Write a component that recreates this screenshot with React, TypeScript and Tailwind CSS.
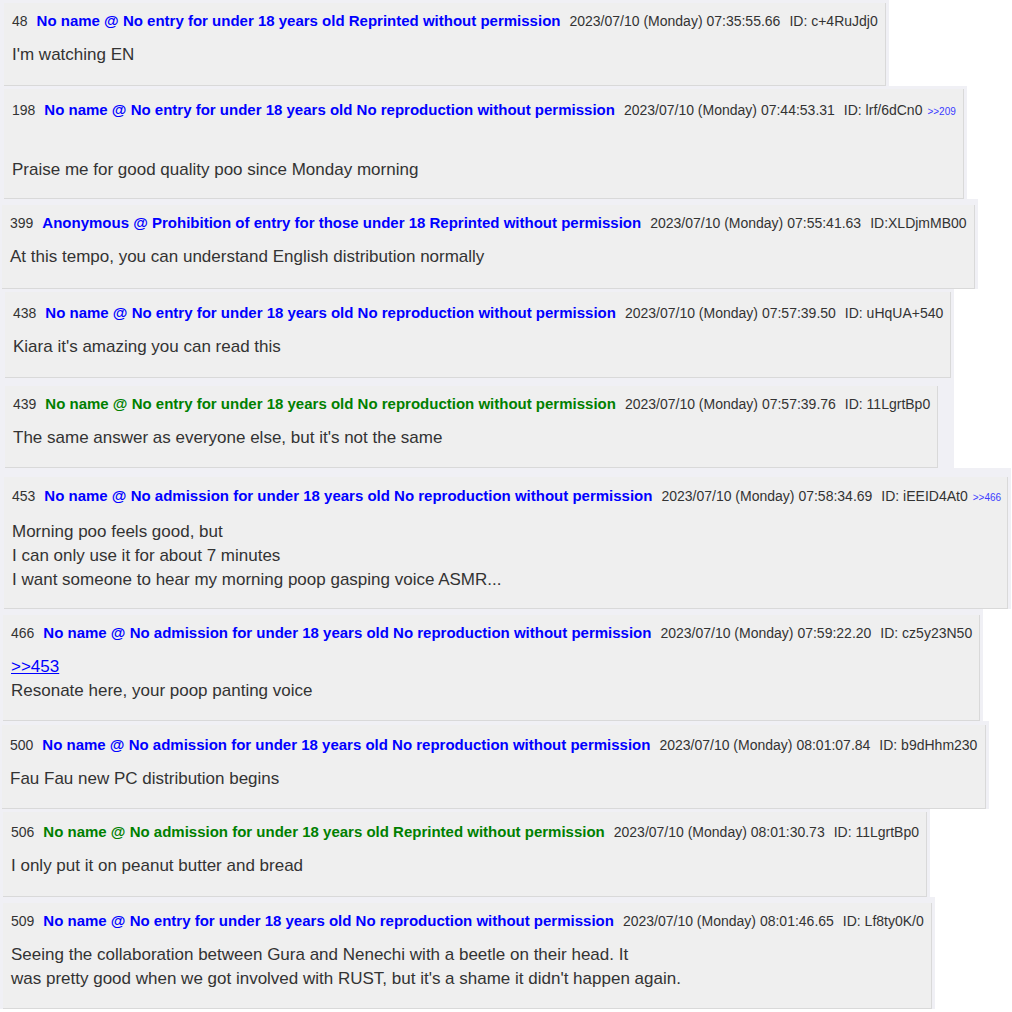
type Post = {
  no: number
  name: string
  green?: boolean
  date: string
  id: string
  reply?: string
  body: string[]
  quote?: string
  strip: string
  box: string
}

const posts: Post[] = [
  {
    no: 48,
    name: "No name @ No entry for under 18 years old Reprinted without permission",
    date: "2023/07/10 (Monday) 07:35:55.66",
    id: "ID: c+4RuJdj0",
    body: ["I'm watching EN"],
    strip: "pt-[3px] pl-[4px] pr-[3px]",
    box: "w-[882px] pt-[8px] pb-[18px]",
  },
  {
    no: 198,
    name: "No name @ No entry for under 18 years old No reproduction without permission",
    date: "2023/07/10 (Monday) 07:44:53.31",
    id: "ID: lrf/6dCn0",
    reply: ">>209",
    body: ["", "Praise me for good quality poo since Monday morning"],
    strip: "pt-[3px] pl-[4px] pr-[3px]",
    box: "w-[960px] pt-[11px] pb-[16px]",
  },
  {
    no: 399,
    name: "Anonymous @ Prohibition of entry for those under 18 Reprinted without permission",
    date: "2023/07/10 (Monday) 07:55:41.63",
    id: "ID:XLDjmMB00",
    body: ["At this tempo, you can understand English distribution normally"],
    strip: "pt-[6px] pl-[2px] pr-[3px]",
    box: "w-[973px] pt-[8px] pb-[19px]",
  },
  {
    no: 438,
    name: "No name @ No entry for under 18 years old No reproduction without permission",
    date: "2023/07/10 (Monday) 07:57:39.50",
    id: "ID: uHqUA+540",
    body: ["Kiara it's amazing you can read this"],
    strip: "pt-[3px] pl-[5px] pr-[3px]",
    box: "w-[946px] pt-[11px] pb-[18px]",
  },
  {
    no: 439,
    name: "No name @ No entry for under 18 years old No reproduction without permission",
    green: true,
    date: "2023/07/10 (Monday) 07:57:39.76",
    id: "ID: 11LgrtBp0",
    body: ["The same answer as everyone else, but it's not the same"],
    strip: "pt-[8px] pl-[5px] pr-[16px]",
    box: "w-[933px] pt-[8px] pb-[17px]",
  },
  {
    no: 453,
    name: "No name @ No admission for under 18 years old No reproduction without permission",
    date: "2023/07/10 (Monday) 07:58:34.69",
    id: "ID: iEEID4At0",
    reply: ">>466",
    body: [
      "Morning poo feels good, but",
      "I can only use it for about 7 minutes",
      "I want someone to hear my morning poop gasping voice ASMR...",
    ],
    strip: "pt-[9px] pl-[4px] pr-[3px]",
    box: "w-[1004px] pt-[9px] pb-[16px]",
  },
  {
    no: 466,
    name: "No name @ No admission for under 18 years old No reproduction without permission",
    date: "2023/07/10 (Monday) 07:59:22.20",
    id: "ID: cz5y23N50",
    quote: ">>453",
    body: ["Resonate here, your poop panting voice"],
    strip: "pt-[6px] pl-[3px] pr-[3px]",
    box: "w-[977px] pt-[8px] pb-[17px]",
  },
  {
    no: 500,
    name: "No name @ No admission for under 18 years old No reproduction without permission",
    date: "2023/07/10 (Monday) 08:01:07.84",
    id: "ID: b9dHhm230",
    body: ["Fau Fau new PC distribution begins"],
    strip: "pt-[4px] pl-[2px] pr-[3px]",
    box: "w-[984px] pt-[10px] pb-[17px]",
  },
  {
    no: 506,
    name: "No name @ No admission for under 18 years old Reprinted without permission",
    green: true,
    date: "2023/07/10 (Monday) 08:01:30.73",
    id: "ID: 11LgrtBp0",
    body: ["I only put it on peanut butter and bread"],
    strip: "pt-[3px] pl-[3px] pr-[3px]",
    box: "w-[924px] pt-[10px] pb-[18px]",
  },
  {
    no: 509,
    name: "No name @ No entry for under 18 years old No reproduction without permission",
    date: "2023/07/10 (Monday) 08:01:46.65",
    id: "ID: Lf8ty0K/0",
    body: [
      "Seeing the collaboration between Gura and Nenechi with a beetle on their head. It",
      "was pretty good when we got involved with RUST, but it's a shame it didn't happen again.",
    ],
    strip: "pt-[6px] pl-[3px] pr-[3px]",
    box: "w-[929px] pt-[8px] pb-[17px]",
  },
]

function PostCard({ post }: { post: Post }) {
  return (
    <div className={`bg-[#f0f0f5] ${post.strip}`}>
      <div className={`bg-[#efefef] border-r border-b border-[#d9d9d9] pl-[8px] ${post.box}`}>
        <div className="flex items-baseline gap-[9px] leading-[20px] whitespace-nowrap">
          <span className="text-[14px] text-[#333]">{post.no}</span>
          <span className={`text-[15px] font-bold ${post.green ? "text-[#008000]" : "text-[#0000ff]"}`}>
            {post.name}
          </span>
          <span className="text-[14px] text-[#333]">{post.date}</span>
          <span className="text-[14px] text-[#333]">
            {post.id}
            {post.reply && <span className="ml-[5px] text-[10px] text-[#3b3bff]">{post.reply}</span>}
          </span>
        </div>
        <div className="mt-[12px] text-[17px] leading-[24px] text-[#333]">
          {post.quote && (
            <div>
              <a className="text-[#0000ff] underline">{post.quote}</a>
            </div>
          )}
          {post.body.map((line, i) => (
            <div key={i} className="h-[24px] whitespace-nowrap">
              {line}
            </div>
          ))}
        </div>
      </div>
    </div>
  )
}

export default function App() {
  return (
    <div className="min-h-screen bg-white font-['Liberation_Sans',Arial,sans-serif]">
      <div className="flex flex-col items-start">
        {posts.map((p) => (
          <PostCard key={p.no} post={p} />
        ))}
      </div>
    </div>
  )
}
